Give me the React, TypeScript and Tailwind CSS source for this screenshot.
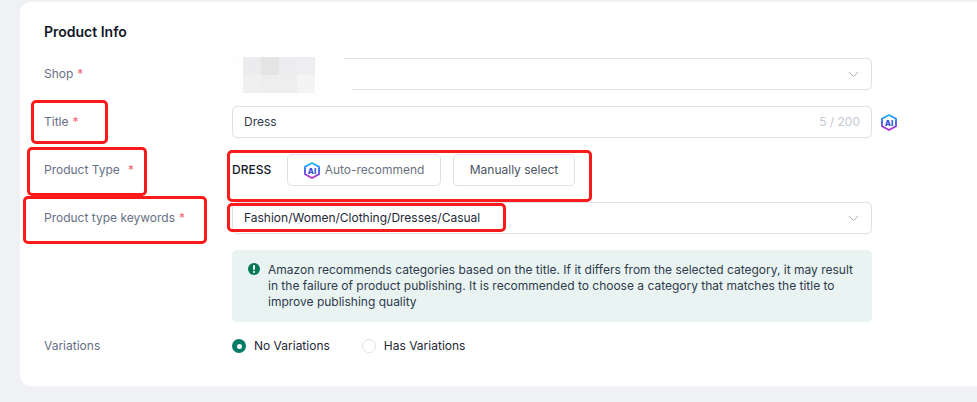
import React from 'react';
import { ChevronDown } from 'lucide-react';

// small hexagon "AI" badge
function AiBadge({ id }: { id: string }) {
  return (
    <svg width="16" height="17" viewBox="0 0 16 17" className="shrink-0">
      <defs>
        <linearGradient id={id} x1="0" y1="0" x2="0" y2="1">
          <stop offset="0" stopColor="#19b5f5" />
          <stop offset="0.5" stopColor="#3a5bec" />
          <stop offset="1" stopColor="#c026d3" />
        </linearGradient>
      </defs>
      <path
        d="M8 1 L15 4.8 V12.2 L8 16 L1 12.2 V4.8 Z"
        fill="#fff"
        stroke={`url(#${id})`}
        strokeWidth="1.8"
        strokeLinejoin="round"
      />
      <text x="8" y="11.5" textAnchor="middle" fontSize="8" fontWeight="800" fill="#2f4fd8" fontFamily="Inter, sans-serif">
        AI
      </text>
    </svg>
  );
}

function Label({ text, gap = 'ml-1' }: { text: string; gap?: string }) {
  return (
    <div className="w-[188px] shrink-0 text-xs text-[#667085]">
      {text}
      <span className={`${gap} text-[#f4606f]`}>*</span>
    </div>
  );
}

function RedBox({ className }: { className: string }) {
  return <div className={`absolute border-[3px] border-[#fb1a1a] rounded-[5px] pointer-events-none ${className}`} />;
}

const mosaic = [
  'bg-[#ececee]', 'bg-[#e4e4e5]', 'bg-[#ededef]', 'bg-[#eeeef0]',
  'bg-[#f0f0f1]', 'bg-[#eeeeef]', 'bg-[#eeeeef]', 'bg-[#f4f4f5]',
];

export default function App() {
  return (
    <div className="relative w-[977px] h-[402px] overflow-hidden bg-[#f0f1f5] pt-[2px] pl-5 font-['Inter',sans-serif]">
      <div className="bg-white rounded-l-[10px] h-[384px] pt-[21px] pl-6">
        <h3 className="text-[14px] leading-[18px] font-semibold text-[#111827]">Product Info</h3>

        <div className="mt-[17px] flex flex-col gap-4">
          <div className="flex items-center h-8">
            <Label text="Shop" />
            <div className="w-[640px] h-8 border border-[#e0e1e8] rounded-[5px] flex items-center justify-end pr-[9px]">
              <ChevronDown size={17} strokeWidth={1.4} className="text-[#a4a8b3]" />
            </div>
          </div>

          <div className="flex items-center h-8">
            <Label text="Title" />
            <div className="w-[640px] h-8 border border-[#e0e1e8] rounded-[5px] flex items-center justify-between px-[11px] text-xs">
              <span className="text-[#333b4d]">Dress</span>
              <span className="text-[#c4c9d6]">5 / 200</span>
            </div>
            <div className="ml-[9px]">
              <AiBadge id="ai-title" />
            </div>
          </div>

          <div className="flex items-center h-8">
            <Label text="Product Type" gap="ml-2" />
            <span className="w-[55px] text-xs font-medium text-[#111827]">DRESS</span>
            <button type="button" className="w-[154px] h-8 border border-[#e0e1e8] rounded-[5px] flex items-center justify-center gap-[5px] text-xs text-[#6b7280]">
              <AiBadge id="ai-type" />
              Auto-recommend
            </button>
            <button type="button" className="ml-3 w-[122px] h-8 border border-[#e0e1e8] rounded-[5px] text-xs text-[#4b5563]">
              Manually select
            </button>
          </div>

          <div className="flex items-center h-8">
            <Label text="Product type keywords" />
            <div className="w-[640px] h-8 border border-[#e0e1e8] rounded-[5px] flex items-center justify-between pl-[11px] pr-[9px] text-xs text-[#1f2937]">
              Fashion/Women/Clothing/Dresses/Casual
              <ChevronDown size={17} strokeWidth={1.4} className="text-[#a4a8b3]" />
            </div>
          </div>

          <div className="ml-[188px] w-[640px] h-[72px] bg-[#e9f4f2] rounded-[5px] flex pl-4 pr-2 pt-3 gap-2">
            <div className="w-3 h-3 mt-[1px] shrink-0 rounded-full bg-[#047857] flex flex-col items-center justify-center gap-[1px]">
              <span className="w-[2px] h-[5px] bg-white rounded-[1px]" />
              <span className="w-[2px] h-[2px] bg-white rounded-[1px]" />
            </div>
            <p className="text-xs leading-4 text-[#2f3a4c]">
              Amazon recommends categories based on the title. If it differs from the selected category, it may result in the failure of product publishing. It is recommended to choose a category that matches the title to improve publishing quality
            </p>
          </div>

          <div className="flex items-center h-5 -mt-[2px]">
            <div className="w-[188px] shrink-0 text-xs text-[#667085]">Variations</div>
            <div className="w-[14px] h-[14px] rounded-full bg-[#047c66] flex items-center justify-center">
              <span className="w-[5px] h-[5px] rounded-full bg-white" />
            </div>
            <span className="ml-2 text-xs text-[#1f2937]">No Variations</span>
            <div className="ml-8 w-[14px] h-[14px] rounded-full border border-[#dfe0e8]" />
            <span className="ml-2 text-xs text-[#1f2937]">Has Variations</span>
          </div>
        </div>
      </div>

      {/* blurred out shop name */}
      <div className="absolute left-[228px] top-[57px] w-[124px] h-[43px] rounded-[14px] bg-[#fefefe]" />
      <div className="absolute left-[243px] top-[57px] w-[72px] h-[36px] grid grid-cols-4">
        {mosaic.map((c, i) => (
          <div key={i} className={c} />
        ))}
      </div>

      {/* red annotation boxes */}
      <RedBox className="left-[31px] top-[100px] w-[77px] h-[44px]" />
      <RedBox className="left-[27px] top-[147px] w-[120px] h-[49px]" />
      <RedBox className="left-[23px] top-[196px] w-[184px] h-[48px]" />
      <RedBox className="left-[227px] top-[150px] w-[365px] h-[52px]" />
      <RedBox className="left-[227px] top-[203px] w-[279px] h-[29px]" />
    </div>
  );
}
